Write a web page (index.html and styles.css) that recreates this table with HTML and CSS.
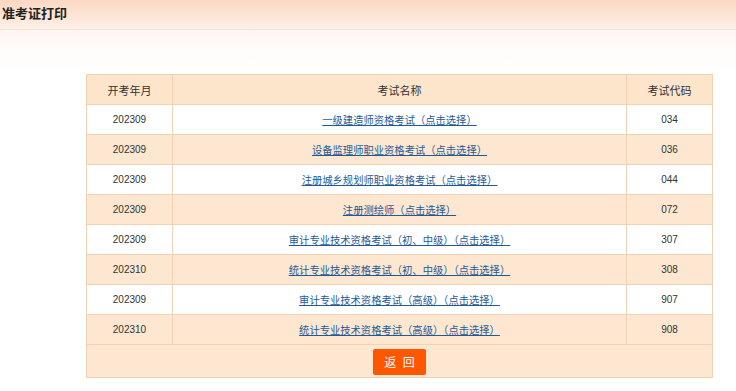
FILE: index.html
```html
<!DOCTYPE html>
<html lang="zh">
<head>
<meta charset="utf-8">
<title>准考证打印</title>
<link rel="stylesheet" href="styles.css">
</head>
<body>
<div class="topbar"><h1 class="title">准考证打印</h1></div>
<div class="fade"></div>
<table class="exam">
  <colgroup><col class="c1"><col class="c2"><col class="c3"></colgroup>
  <thead>
    <tr><th>开考年月</th><th>考试名称</th><th>考试代码</th></tr>
  </thead>
  <tbody>
    <tr><td>202309</td><td><a href="#">一级建造师资格考试（点击选择）</a></td><td>034</td></tr>
    <tr class="alt"><td>202309</td><td><a href="#">设备监理师职业资格考试（点击选择）</a></td><td>036</td></tr>
    <tr><td>202309</td><td><a href="#">注册城乡规划师职业资格考试（点击选择）</a></td><td>044</td></tr>
    <tr class="alt"><td>202309</td><td><a href="#">注册测绘师（点击选择）</a></td><td>072</td></tr>
    <tr><td>202309</td><td><a href="#">审计专业技术资格考试（初、中级）（点击选择）</a></td><td>307</td></tr>
    <tr class="alt"><td>202310</td><td><a href="#">统计专业技术资格考试（初、中级）（点击选择）</a></td><td>308</td></tr>
    <tr><td>202309</td><td><a href="#">审计专业技术资格考试（高级）（点击选择）</a></td><td>907</td></tr>
    <tr class="alt"><td>202310</td><td><a href="#">统计专业技术资格考试（高级）（点击选择）</a></td><td>908</td></tr>
    <tr class="alt foot"><td colspan="3"><button class="back" type="button">返&nbsp;回</button></td></tr>
  </tbody>
</table>
</body>
</html>
```

FILE: styles.css
```css
html, body {
  margin: 0;
  padding: 0;
  background: #fff;
}
body {
  font-family: "Liberation Sans", "Noto Sans CJK SC", sans-serif;
  color: #333;
  font-size: 10px;
}
.topbar {
  height: 29px;
  background: linear-gradient(to bottom, #fcd8c2 0%, #fde5d6 55%, #fef0e8 100%);
  border-bottom: 1px solid #f3e1d4;
  display: flex;
  align-items: center;
}
.title {
  margin: 0 0 4px 2px;
  font-family: "Noto Sans CJK SC", sans-serif;
  font-size: 13px;
  font-weight: bold;
  color: #222;
}
.fade {
  height: 44px;
  background: linear-gradient(to bottom, #fef6f1 0%, #fffcfa 50%, #ffffff 100%);
}
.exam {
  margin-left: 86px;
  width: 627px;
  border-collapse: collapse;
  border: 1px solid #f1d2b4;
  table-layout: fixed;
}
.c1 { width: 86px; }
.c3 { width: 86px; }
.exam th, .exam td {
  border: 1px solid #f1d2b4;
  height: 29px;
  padding: 0;
  text-align: center;
  font-size: 10px;
  font-weight: normal;
  color: #333;
}
.exam th {
  background: #fde5cc;
  font-family: "Noto Sans CJK SC", sans-serif;
  font-size: 11px;
  color: #333;
}
.exam tr.alt td {
  background: #fde7d1;
}
.exam a {
  font-family: "Noto Sans CJK SC", sans-serif;
  font-size: 10.3px;
  color: #1f5a96;
  text-decoration: underline;
}
.exam tr.foot td {
  height: 32px;
}
.back {
  width: 53px;
  height: 26px;
  border: none;
  border-radius: 2px;
  background: #ff5600;
  color: #fff;
  font-family: "Noto Sans CJK SC", sans-serif;
  font-size: 12px;
  letter-spacing: 2px;
  padding: 0 0 0 2px;
  vertical-align: middle;
  margin-top: 1px;
}
```
